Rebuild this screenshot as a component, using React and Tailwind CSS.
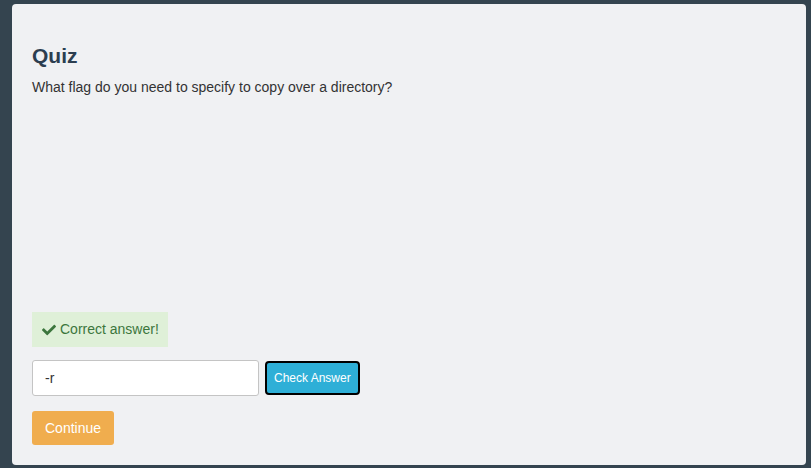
import { FaCheck } from 'react-icons/fa'

export default function App() {
  return (
    <div className="w-[811px] h-[468px] bg-[#34444f] pt-[4px] pl-[12px] pr-[5px] pb-[3px] font-['Liberation_Sans',Arial,sans-serif]">
      <div className="h-full rounded-[4px] bg-[#f0f1f3] px-[20px] pt-[40px] flex flex-col items-start">
        <h1 className="text-[21px] leading-[24px] font-bold text-[#2c3e50]">Quiz</h1>
        <p className="mt-[9px] text-[14px] leading-[20px] text-[#333]">
          What flag do you need to specify to copy over a directory?
        </p>

        {/* Feedback */}
        <div className="mt-[215px] h-[35px] flex items-center gap-[4px] pl-[10px] pr-[9px] bg-[#dff0d8] text-[#3c763d] text-[14px]">
          <FaCheck className="w-[14px] h-[14px]" />
          <span>Correct answer!</span>
        </div>

        {/* Answer row */}
        <div className="mt-[13px] flex items-center gap-[6px]">
          <input
            defaultValue="-r"
            className="w-[227px] h-[36px] px-[12px] bg-white border border-[#c4c4c4] rounded-[3px] text-[14px] text-[#333] outline-none"
          />
          <button className="h-[34px] px-[7px] rounded-[4px] border-2 border-black bg-[#2eafd7] text-white text-[12px]">
            Check Answer
          </button>
        </div>

        <button className="mt-[15px] h-[34px] px-[13px] rounded-[3px] bg-[#f0ad4e] text-white text-[14px]">
          Continue
        </button>
      </div>
    </div>
  )
}
